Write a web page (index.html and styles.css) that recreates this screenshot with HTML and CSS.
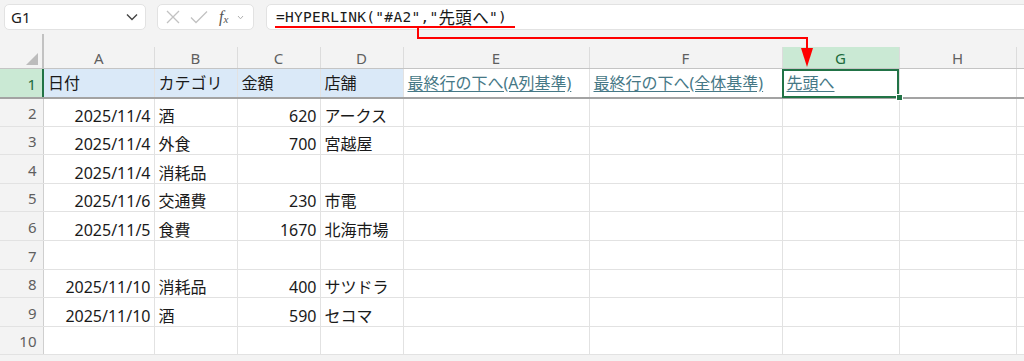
FILE: index.html
```html
<!DOCTYPE html>
<html lang="ja">
<head>
  <meta charset="UTF-8">
  <meta name="viewport" content="width=device-width, initial-scale=1.0">
  <title>HYPERLINK - 先頭へ</title>
  <link rel="stylesheet" href="styles.css">
</head>
<body>
  <div class="toolbar">
    <div class="name-box">
      <span>G1</span>
      <svg class="chevron" width="12" height="8" viewBox="0 0 12 8"><path d="M1 1.5 L6 6.5 L11 1.5" fill="none" stroke="#444" stroke-width="1.4"/></svg>
    </div>
    <div class="fn-box">
      <svg width="16" height="14" viewBox="0 0 16 14"><path d="M2 1 L14 13 M14 1 L2 13" fill="none" stroke="#c2c2c2" stroke-width="1.3"/></svg>
      <svg width="18" height="14" viewBox="0 0 18 14"><path d="M1 7.5 L6 12.5 L17 1.5" fill="none" stroke="#c2c2c2" stroke-width="1.3"/></svg>
      <span class="fx"><i>f</i><sub>x</sub></span>
      <svg width="7" height="5" viewBox="0 0 7 5"><path d="M1 1 L3.5 3.8 L6 1" fill="none" stroke="#b0b0b0" stroke-width="1"/></svg>
    </div>
    <div class="formula">=HYPERLINK("#A2","<span class="jp">先頭へ</span>")</div>
  </div>

  <table class="sheet">
    <colgroup>
      <col class="c-hd">
      <col class="c-a">
      <col class="c-b">
      <col class="c-c">
      <col class="c-d">
      <col class="c-e">
      <col class="c-f">
      <col class="c-g">
      <col class="c-h">
      <col class="c-i">
    </colgroup>
    <thead>
      <tr>
        <th class="corner"><span class="tri"></span></th>
        <th>A</th>
        <th>B</th>
        <th>C</th>
        <th>D</th>
        <th>E</th>
        <th>F</th>
        <th class="active">G</th>
        <th>H</th>
        <th></th>
      </tr>
    </thead>
    <tbody>
      <tr class="freeze">
        <th class="active">1</th>
        <td class="fill">日付</td>
        <td class="fill">カテゴリ</td>
        <td class="fill">金額</td>
        <td class="fill">店舗</td>
        <td><span class="link">最終行の下へ(A列基準)</span></td>
        <td><span class="link">最終行の下へ(全体基準)</span></td>
        <td class="selected"><span class="link">先頭へ</span></td>
        <td></td>
        <td></td>
      </tr>
      <tr>
        <th>2</th>
        <td class="num">2025/11/4</td>
        <td>酒</td>
        <td class="num">620</td>
        <td>アークス</td>
        <td></td><td></td><td></td><td></td><td></td>
      </tr>
      <tr>
        <th>3</th>
        <td class="num">2025/11/4</td>
        <td>外食</td>
        <td class="num">700</td>
        <td>宮越屋</td>
        <td></td><td></td><td></td><td></td><td></td>
      </tr>
      <tr>
        <th>4</th>
        <td class="num">2025/11/4</td>
        <td>消耗品</td>
        <td></td>
        <td></td>
        <td></td><td></td><td></td><td></td><td></td>
      </tr>
      <tr>
        <th>5</th>
        <td class="num">2025/11/6</td>
        <td>交通費</td>
        <td class="num">230</td>
        <td>市電</td>
        <td></td><td></td><td></td><td></td><td></td>
      </tr>
      <tr>
        <th>6</th>
        <td class="num">2025/11/5</td>
        <td>食費</td>
        <td class="num">1670</td>
        <td>北海市場</td>
        <td></td><td></td><td></td><td></td><td></td>
      </tr>
      <tr>
        <th>7</th>
        <td></td><td></td><td></td><td></td>
        <td></td><td></td><td></td><td></td><td></td>
      </tr>
      <tr>
        <th>8</th>
        <td class="num">2025/11/10</td>
        <td>消耗品</td>
        <td class="num">400</td>
        <td>サツドラ</td>
        <td></td><td></td><td></td><td></td><td></td>
      </tr>
      <tr>
        <th>9</th>
        <td class="num">2025/11/10</td>
        <td>酒</td>
        <td class="num">590</td>
        <td>セコマ</td>
        <td></td><td></td><td></td><td></td><td></td>
      </tr>
      <tr>
        <th>10</th>
        <td></td><td></td><td></td><td></td>
        <td></td><td></td><td></td><td></td><td></td>
      </tr>
    </tbody>
  </table>

  <!-- 数式から G1 への赤い注釈線 -->
  <svg class="callout" width="1024" height="70" viewBox="0 0 1024 70">
    <path d="M275 27 H515 M418 27 V38 H807 V50" fill="none" stroke="#ff0000" stroke-width="2"/>
    <polygon points="801,48 813,48 807,67" fill="#ff0000"/>
  </svg>
</body>
</html>
```

FILE: styles.css
```css
body {
  margin: 0;
  background: #f3f3f3;
  font-family: "Noto Sans", "Noto Sans CJK JP", sans-serif;
  color: #1a1a1a;
  overflow: hidden;
  position: relative;
  width: 1024px;
  height: 361px;
}

.toolbar {
  display: flex;
  align-items: flex-start;
  gap: 11px;
  height: 47px;
  padding: 4px 0 0 4px;
  box-sizing: border-box;
}

.name-box,
.fn-box,
.formula {
  height: 26px;
  background: #fff;
  border: 1px solid #e2e2e2;
  border-radius: 5px;
  box-sizing: border-box;
  display: flex;
  align-items: center;
}

.name-box {
  width: 142px;
  padding: 0 6px 0 6px;
  justify-content: space-between;
  font-size: 15px;
}

.name-box .chevron {
  margin-right: 1px;
}

.fn-box {
  width: 97px;
  padding: 0 4px 0 7px;
  gap: 9px;
}

.fx {
  font-family: "Liberation Serif", serif;
  font-size: 16px;
  color: #555;
  margin-left: 2px;
  line-height: 1;
}

.fx sub {
  font-size: 11px;
  font-style: italic;
  vertical-align: -1px;
}

.formula {
  flex: 1;
  margin-right: -8px;
  margin-left: 1px;
  padding-left: 9px;
  font-family: "DejaVu Sans Mono", "Noto Sans CJK JP", monospace;
  font-size: 14.5px;
  letter-spacing: 0.3px;
  color: #1a1a1a;
  white-space: pre;
}

.formula .jp {
  font-family: "Noto Sans CJK JP", sans-serif;
  font-size: 16.5px;
}

.sheet {
  table-layout: fixed;
  border-collapse: collapse;
  width: 1024px;
  background: #fff;
}

.c-hd { width: 43px; }
.c-a { width: 111px; }
.c-b { width: 83px; }
.c-c { width: 83px; }
.c-d { width: 83px; }
.c-e { width: 186px; }
.c-f { width: 193px; }
.c-g { width: 117px; }
.c-h { width: 117px; }
.c-i { width: 8px; }

.sheet th,
.sheet td {
  padding: 0;
  white-space: nowrap;
}

.sheet thead th {
  height: 21px;
  background: #f3f3f3;
  color: #5f5f5f;
  font-weight: normal;
  font-size: 15px;
  line-height: 20px;
  border-left: 1px solid #dcdcdc;
  border-bottom: 1px solid #c4c4c4;
  vertical-align: middle;
}

.sheet thead th.active {
  background: #cae9d4;
  color: #1c6b3c;
}

.sheet thead .corner {
  position: relative;
  border-left: none;
  border-right: 2px solid #c2c2c2;
}

.corner::before {
  content: "";
  position: absolute;
  right: -2px;
  top: -13px;
  width: 2px;
  height: 13px;
  background: #c2c2c2;
}

.tri {
  position: absolute;
  right: 4px;
  bottom: 3px;
  width: 0;
  height: 0;
  border-left: 12px solid transparent;
  border-bottom: 12px solid #bcbcbc;
}

.sheet tbody tr {
  height: 28.6px;
}

.sheet tbody th {
  background: #f3f3f3;
  color: #5f5f5f;
  font-weight: normal;
  font-size: 15px;
  line-height: 20px;
  text-align: right;
  padding-right: 6px;
  vertical-align: bottom;
  padding-bottom: 3px;
  border-right: 1px solid #cfcfcf;
  border-bottom: 1px solid #e2e2e2;
}

.sheet tbody th.active {
  background: #cae9d4;
  color: #1c6b3c;
  border-right: 2px solid #217346;
}

.sheet td {
  font-size: 16px;
  line-height: 20px;
  vertical-align: bottom;
  padding: 0 3px 0 4px;
  border-right: 1px solid #e2e2e2;
  border-bottom: 1px solid #e2e2e2;
}

.sheet td.num {
  text-align: right;
}

.sheet td.fill {
  background: #dae9f8;
}

.sheet tr.freeze {
  height: 29px;
}

.sheet tr.freeze th,
.sheet tr.freeze td {
  height: auto;
  border-bottom: 2px solid #a3a3a3;
}

.sheet tr.freeze td {
  padding-bottom: 4px;
}

.link {
  color: #467886;
  text-decoration: underline;
  text-underline-offset: 2px;
}

.sheet td.selected {
  position: relative;
  outline: 2px solid #217346;
  outline-offset: -2px;
}

.selected::after {
  content: "";
  position: absolute;
  right: -4px;
  bottom: -4px;
  width: 5px;
  height: 5px;
  background: #217346;
  border: 1px solid #fff;
}

.callout {
  position: absolute;
  left: 0;
  top: 0;
  pointer-events: none;
}
```
